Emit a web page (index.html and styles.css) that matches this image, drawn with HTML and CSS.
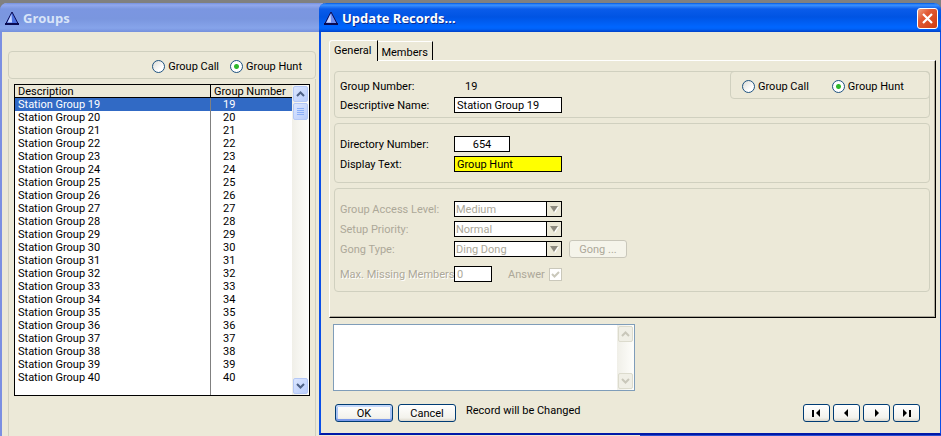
FILE: index.html
```html
<!DOCTYPE html>
<html lang="en">
<head>
  <meta charset="UTF-8" />
  <title>Update Records</title>
  <link rel="stylesheet" href="styles.css">
</head>
<body>
  <div class="desktop">

    <!-- Groups window -->
    <section class="window groups">
      <header class="titlebar inactive">
        <svg class="logo" width="14" height="14" viewBox="0 0 14 14">
          <path d="M7 1 L13 12.500 H1 Z" fill="#4a6fe0" stroke="#0a0a50" stroke-width="1" />
          <path d="M6.500 3 L2.500 11.500 H7 Z" fill="#c4d4ff" />
          <path d="M0 13 H14" stroke="#0a0a50" stroke-width="2" />
        </svg>
        <h1>Groups</h1>
      </header>
      <div class="groups-body">
        <div class="frame filter">
          <label><input type="radio" name="filter">Group Call</label>
          <label><input type="radio" name="filter" checked>Group Hunt</label>
        </div>
        <div class="list-area">
          <div class="listbox">
            <table>
              <thead>
                <tr><th>Description</th><th>Group Number</th></tr>
              </thead>
              <tbody id="rows"></tbody>
            </table>
            <div class="scrollbar">
              <button type="button" class="scroll-btn" aria-label="Scroll up">
                <svg width="9" height="6" viewBox="0 0 9 6"><path d="M1 5 L4.500 1.500 L8 5" /></svg>
              </button>
              <div class="thumb"><i></i><i></i><i></i><i></i></div>
              <button type="button" class="scroll-btn last" aria-label="Scroll down">
                <svg width="9" height="6" viewBox="0 0 9 6"><path d="M1 1 L4.500 4.500 L8 1" /></svg>
              </button>
            </div>
          </div>
        </div>
      </div>
    </section>

    <!-- Update Records window -->
    <form class="window update">
      <header class="titlebar">
        <svg class="logo" width="14" height="14" viewBox="0 0 14 14">
          <path d="M7 1 L13 12.500 H1 Z" fill="#6f8cf0" stroke="#0a0a50" stroke-width="1" />
          <path d="M6.500 3 L2.500 11.500 H7 Z" fill="#ccd8ff" />
          <path d="M0 13 H14" stroke="#0a0a50" stroke-width="2" />
        </svg>
        <h1>Update Records…</h1>
        <button type="button" class="close" aria-label="Close">
          <svg width="13" height="13" viewBox="0 0 13 13"><path d="M2 2 L11 11 M11 2 L2 11" stroke="#fff" stroke-width="2.200" /></svg>
        </button>
      </header>

      <div class="update-body">
        <nav class="tabs">
          <button type="button" class="tab active">General</button>
          <button type="button" class="tab">Members</button>
        </nav>

        <div class="panel">
          <div class="frame identity">
            <div class="fields">
              <span>Group Number:</span>
              <span class="value">19</span>
              <label for="name">Descriptive Name:</label>
              <input id="name" class="text wide" type="text" value="Station Group 19">
            </div>
            <div class="frame kind">
              <label><input type="radio" name="kind">Group Call</label>
              <label><input type="radio" name="kind" checked>Group Hunt</label>
            </div>
          </div>

          <div class="frame directory">
            <div class="fields">
              <label for="dir">Directory Number:</label>
              <input id="dir" class="text number" type="text" value="654">
              <label for="display">Display Text:</label>
              <input id="display" class="text wide highlight" type="text" value="Group Hunt">
            </div>
          </div>

          <div class="frame access">
            <div class="fields">
              <label for="level">Group Access Level:</label>
              <div class="combo">
                <select id="level" disabled><option>Medium</option></select>
                <span class="arrow"><svg width="9" height="7" viewBox="0 0 9 7"><path d="M1 1 H9 L5 7 Z" fill="#fff" /><path d="M0 0 H8 L4 6 Z" fill="#8f8c80" /></svg></span>
              </div>
              <label for="priority">Setup Priority:</label>
              <div class="combo">
                <select id="priority" disabled><option>Normal</option></select>
                <span class="arrow"><svg width="9" height="7" viewBox="0 0 9 7"><path d="M1 1 H9 L5 7 Z" fill="#fff" /><path d="M0 0 H8 L4 6 Z" fill="#8f8c80" /></svg></span>
              </div>
              <label for="gong">Gong Type:</label>
              <div class="inline">
                <div class="combo">
                  <select id="gong" disabled><option>Ding Dong</option></select>
                  <span class="arrow"><svg width="9" height="7" viewBox="0 0 9 7"><path d="M1 1 H9 L5 7 Z" fill="#fff" /><path d="M0 0 H8 L4 6 Z" fill="#8f8c80" /></svg></span>
                </div>
                <button type="button" class="btn" disabled>Gong ...</button>
              </div>
            </div>
            <div class="fields members">
              <label class="etched" for="missing">Max. Missing Members:</label>
              <div class="inline">
                <input id="missing" class="text small" type="text" value="0" disabled>
                <label class="answer">Answer
                  <span class="check">
                    <input type="checkbox" checked disabled>
                    <svg width="9" height="9" viewBox="0 0 9 9"><path d="M1 4 L3.500 6.500 L8 2" /></svg>
                  </span>
                </label>
              </div>
            </div>
          </div>
        </div>

        <div class="memo">
          <textarea aria-label="Notes"></textarea>
          <div class="scrollbar off">
            <button type="button" class="scroll-btn" aria-label="Scroll up" disabled>
              <svg width="9" height="6" viewBox="0 0 9 6"><path d="M1 5 L4.500 1.500 L8 5" /></svg>
            </button>
            <button type="button" class="scroll-btn last" aria-label="Scroll down" disabled>
              <svg width="9" height="6" viewBox="0 0 9 6"><path d="M1 1 L4.500 4.500 L8 1" /></svg>
            </button>
          </div>
        </div>

        <footer class="actions">
          <button type="button" class="btn default">OK</button>
          <button type="button" class="btn">Cancel</button>
          <span class="message">Record will be Changed</span>
          <div class="navigator">
            <button type="button" class="btn" aria-label="First"><svg width="9" height="8" viewBox="0 0 9 8"><path d="M0 1 H2 V8 H0 Z M8 0 V8 L4 4 Z" /></svg></button>
            <button type="button" class="btn" aria-label="Previous"><svg width="9" height="8" viewBox="0 0 9 8"><path d="M6 0 V8 L2 4 Z" /></svg></button>
            <button type="button" class="btn" aria-label="Next"><svg width="9" height="8" viewBox="0 0 9 8"><path d="M3 0 V8 L7 4 Z" /></svg></button>
            <button type="button" class="btn" aria-label="Last"><svg width="9" height="8" viewBox="0 0 9 8"><path d="M1 0 V8 L5 4 Z M7 1 H9 V8 H7 Z" /></svg></button>
          </div>
        </footer>
      </div>
    </form>
  </div>

  <script>
    // Fill the station list
    const rows = document.getElementById("rows");
    for (let n = 19; n <= 40; n++) {
      const tr = document.createElement("tr");
      if (n === 19) tr.className = "selected";
      tr.innerHTML = `<td>Station Group ${n}</td><td>${n}</td>`;
      rows.appendChild(tr);
    }
  </script>
</body>
</html>
```
FILE: styles.css
```css
* {
  box-sizing: border-box;
}

body {
  margin: 0;
  background: #808080;
  font-family: Roboto, "Liberation Sans", Arial, sans-serif;
  font-size: 11px;
  line-height: 13px;
  color: #000;
}

input, select, button, textarea {
  font: inherit;
  color: inherit;
  margin: 0;
  border-radius: 0;
}

.desktop {
  display: flex;
  align-items: flex-start;
  min-height: 100vh;
  padding-top: 3px;
  background: linear-gradient(#808080 0 10px, transparent 10px), linear-gradient(90deg, #ece9d8 68%, #2a4fd0 68%);
}

.window {
  background: #ece9d8;
  border-radius: 7px 7px 0 0;
}

.groups {
  flex: 0 0 327px;
  align-self: stretch;
  display: flex;
  flex-direction: column;
  border-left: 2px solid #7b8fe2;
}

.update {
  flex: 1;
  min-width: 0;
  position: relative;
  margin-left: -8px;
  border: solid #0a4fe8;
  border-width: 0 1px 2px 2px;
  border-bottom-color: #0019a8;
}

/* Title bars */
.titlebar {
  display: flex;
  align-items: center;
  height: 29px;
  margin: 0 -1px 0 -2px;
  padding: 1px 3px 0 5px;
  border-radius: 7px 7px 0 0;
  background: linear-gradient(#0058e0, #3c92ff 2px, #0a5cea 6px, #0054e3 14px, #0066ff 24px, #0062f8 26px, #0040c8);
}

.titlebar.inactive {
  margin-right: 0;
  background: linear-gradient(#7590e0, #92a8ee 2px, #7b96e1 6px, #7a96df 16px, #86a4ea 25px, #7590dc);
}

.titlebar h1 {
  flex: 1;
  margin: 0 0 0 4px;
  font: bold 13px/16px "Open Sans", "Noto Sans", sans-serif;
  color: #fff;
  text-shadow: 1px 1px 0 #0a2c90;
}

.titlebar.inactive h1 {
  color: #d8e4f8;
  text-shadow: none;
}

.close {
  display: grid;
  place-items: center;
  width: 21px;
  height: 21px;
  padding: 0;
  border: 1px solid #fff;
  border-radius: 3px;
  background: linear-gradient(135deg, #f0a080, #e25a34 35%, #d03c10);
}

/* Frames and radios */
.frame {
  border: 1px solid #d0d0bf;
  border-radius: 4px;
}

.groups-body {
  flex: 1;
  display: flex;
  flex-direction: column;
  padding: 19px 11px 0 6px;
}

.filter {
  display: flex;
  justify-content: flex-end;
  align-items: center;
  gap: 11px;
  height: 28px;
  padding: 2px 13px 0 0;
}

.filter label,
.kind label {
  display: flex;
  align-items: center;
  gap: 3px;
}

input[type="radio"] {
  appearance: none;
  width: 13px;
  height: 13px;
  border: 1px solid #1d5281;
  border-radius: 50%;
  background: linear-gradient(135deg, #dcdcd6, #fff 70%);
}

input[type="radio"]:checked {
  background: radial-gradient(circle, #2fb82b 0 2px, #fff 3px);
}

/* List */
.list-area {
  flex: 1;
  padding: 5px 5px 0;
  border: solid #d0d0bf;
  border-width: 0 1px;
}

.listbox {
  display: flex;
  height: 312px;
  border: 1px solid #000;
  background: linear-gradient(90deg, transparent 195px, #808080 195px 196px, transparent 196px) #fff;
}

.listbox table {
  flex: 1;
  align-self: flex-start;
  table-layout: fixed;
  border-collapse: separate;
  border-spacing: 0;
}

.listbox th {
  height: 13px;
  padding: 1px 3px 0;
  border-bottom: 1px solid #000;
  background: #ece9d8;
  font-weight: normal;
  text-align: left;
  line-height: 11px;
  white-space: nowrap;
}

.listbox th:first-child {
  width: 196px;
  border-right: 1px solid #000;
}

.listbox td {
  height: 13px;
  padding: 0 3px;
}

.listbox td:first-child {
  border-right: 1px solid #808080;
}

.listbox td:last-child {
  padding-left: 12px;
}

.selected {
  background: #316ac5;
  color: #fff;
}

.scrollbar {
  display: flex;
  flex-direction: column;
  width: 17px;
  padding: 1px;
  background: linear-gradient(90deg, #f0efe8, #fefefb);
}

.scroll-btn,
.thumb {
  display: grid;
  place-items: center;
  width: 15px;
  height: 16px;
  padding: 0;
  border: 1px solid #b4c8f6;
  border-radius: 2px;
  background: linear-gradient(135deg, #dbe6ff, #b9cdfb);
}

.scroll-btn path {
  fill: none;
  stroke: #4d6185;
  stroke-width: 2;
}

.scroll-btn.last {
  margin-top: auto;
}

.thumb {
  align-content: center;
  gap: 1px;
  height: 17px;
  margin-top: 1px;
}

.thumb i {
  width: 7px;
  height: 1px;
  background: #8cb0f8;
}

.scrollbar.off .scroll-btn {
  border-color: #dcdbcd;
  background: #f0efe6;
}

.scrollbar.off path {
  stroke: #c9c7ba;
}

/* Tabs */
.update-body {
  padding: 7px 4px 11px 8px;
}

.tabs {
  display: flex;
  align-items: flex-end;
  height: 21px;
}

.tab {
  height: 19px;
  padding: 2px 4px 0 3px;
  border: solid #fff;
  border-width: 1px 1px 0 0;
  border-right-color: #000;
  background: none;
}

.tab.active {
  height: 21px;
  margin-bottom: -1px;
  padding: 0 6px 2px 4px;
  border-left: 1px solid #fff;
  border-radius: 3px 0 0 0;
  background: #ece9d8;
}

.panel {
  display: flex;
  flex-direction: column;
  gap: 5px;
  padding: 10px 5px 25px 4px;
  border: 1px solid #fff;
  border-right-color: #000;
  border-bottom-color: #000;
  box-shadow: inset -1px -1px 0 #aca899;
}

.fields {
  display: grid;
  grid-template-columns: 114px 1fr;
  row-gap: 4px;
  align-items: center;
  padding-left: 5px;
  white-space: nowrap;
}

.identity {
  display: flex;
  justify-content: space-between;
  padding: 6px 0 4px;
}

.identity .fields {
  grid-template-rows: 16px 16px;
  row-gap: 3px;
}

.value {
  padding: 0 11px;
}

.kind {
  display: flex;
  align-items: center;
  gap: 23px;
  width: 200px;
  height: 28px;
  margin: -7px -1px 0 0;
  padding: 2px 0 0 11px;
}

.directory {
  padding: 12px 0 10px;
}

.access {
  padding: 12px 0 9px;
  color: #aca899;
}

.members {
  margin-top: 9px;
}

.etched {
  text-shadow: 1px 1px 0 #fff;
}

.text {
  width: 56px;
  height: 16px;
  padding: 0 2px;
  border: 1px solid #000;
  background: #fff;
}

.text.wide {
  width: 108px;
}

.text.small {
  width: 38px;
}

.text.number {
  text-align: center;
}

.text.highlight {
  background: #ff0;
}

.combo {
  display: flex;
  width: 108px;
  height: 16px;
  border: 1px solid #000;
  background: #fff;
}

.combo select {
  appearance: none;
  flex: 1;
  min-width: 0;
  padding: 0 1px;
  border: 0;
  background: #fff;
  opacity: 1;
}

.arrow {
  display: grid;
  place-items: center;
  width: 15px;
  border-left: 1px solid #000;
  background: #ece9d8;
}

.inline {
  display: flex;
  align-items: center;
  height: 16px;
}

.answer {
  display: flex;
  align-items: center;
  gap: 4px;
  margin-left: 16px;
}

.check {
  display: grid;
  place-items: center;
}

.check input,
.check svg {
  grid-area: 1 / 1;
}

.check input {
  appearance: none;
  width: 13px;
  height: 13px;
  border: 1px solid #cac8bb;
  background: #fff;
}

.check path {
  fill: none;
  stroke: #cac8bb;
  stroke-width: 2;
}

/* Buttons */
.btn {
  display: grid;
  place-items: center;
  width: 58px;
  height: 18px;
  padding: 0;
  border: 1px solid #003c74;
  border-radius: 3px;
  background: linear-gradient(#fff, #f3f2ec 80%, #dcd8cc);
}

.btn.default {
  box-shadow: inset 0 2px 0 #c4d8fa, inset 0 -2px 0 #7b9aea, inset 2px 0 0 #a9c3f3, inset -2px 0 0 #a9c3f3;
}

.btn:disabled {
  margin-left: 7px;
  border-color: #c9c7ba;
  background: #f5f4ea;
}

.memo {
  display: flex;
  width: 302px;
  height: 67px;
  margin: 6px 0 0 4px;
  border: 1px solid #7f9db9;
  background: #fff;
}

.memo textarea {
  flex: 1;
  border: 0;
  resize: none;
  outline: 0;
}

.actions {
  display: flex;
  align-items: center;
  gap: 5px;
  margin-top: 13px;
  padding: 0 16px 0 6px;
}

.message {
  margin: -5px 0 0 5px;
}

.navigator {
  display: flex;
  gap: 3px;
  margin-left: auto;
}

.navigator .btn {
  width: 27px;
}
```
